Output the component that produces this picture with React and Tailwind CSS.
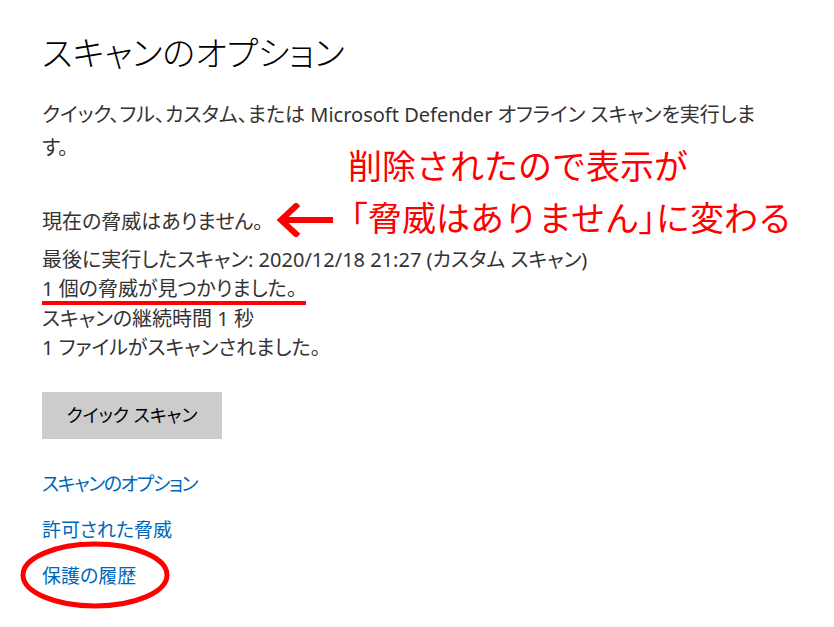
import React from "react";

const font = { fontFamily: '"Noto Sans", "Noto Sans CJK JP", sans-serif' };

function App() {
  return (
    <div className="relative w-[834px] h-[627px] bg-white overflow-hidden" style={font}>
      <div className="pl-[42px] flex flex-col items-start [font-feature-settings:'palt']">
        <h1 className="pt-[30px] text-[34px] leading-[46px] font-light text-black">
          スキャンのオプション
        </h1>

        <p className="mt-[22px] text-[20px] leading-[33px] text-[#333]">
          クイック、フル、カスタム、または Microsoft Defender オフライン スキャンを実行しま
          <br />
          す。
        </p>

        <div className="mt-[43px] text-[20px] leading-[29.5px] text-[#333]">
          <div>現在の脅威はありません。</div>
          <div className="mt-[8px]">最後に実行したスキャン: 2020/12/18 21:27 (カスタム スキャン)</div>
          <div>1 個の脅威が見つかりました。</div>
          <div>スキャンの継続時間 1 秒</div>
          <div>1 ファイルがスキャンされました。</div>
        </div>

        <button className="mt-[29px] w-[180px] h-[47px] bg-[#cccccc] text-[18px] text-black">
          クイック スキャン
        </button>

        <div className="mt-[30px] flex flex-col gap-[16px] text-[19px] leading-[30px] text-[#0067b8]">
          <a className="tracking-[-1.4px]">スキャンのオプション</a>
          <a>許可された脅威</a>
          <a>保護の履歴</a>
        </div>
      </div>

      {/* annotations */}
      <div className="absolute left-[348px] top-[140px] text-[34px] leading-[52px] text-[#ff0000]">
        <div>削除されたので表示が</div>
        <div className="-ml-[14px]">
          「脅威はありません<span className="[font-feature-settings:'palt']">」</span>に変わる
        </div>
      </div>

      <svg className="absolute left-[276px] top-[203px]" width="60" height="34" viewBox="0 0 60 34">
        <path d="M57 17 H6" stroke="#ff0000" strokeWidth="6" fill="none" />
        <path d="M20 3 L5 17 L20 31" stroke="#ff0000" strokeWidth="6" fill="none" strokeLinecap="square" />
      </svg>

      <div className="absolute left-[42px] top-[301px] w-[264px] h-[4px] bg-[#ff0000]" />

      <svg className="absolute left-[18px] top-[539px]" width="154" height="72" viewBox="0 0 154 72">
        <ellipse cx="77" cy="36" rx="72" ry="31" stroke="#ff0000" strokeWidth="5" fill="none" />
      </svg>
    </div>
  );
}

export default App;
